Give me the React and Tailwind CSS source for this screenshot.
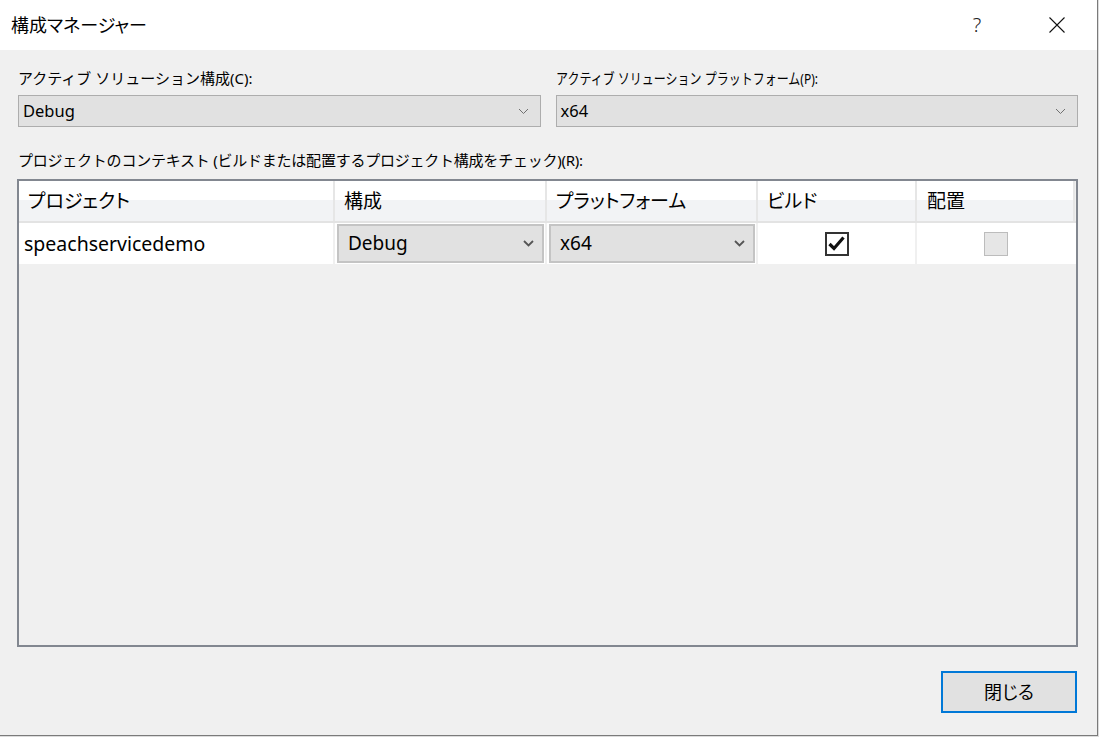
import React from "react";

const font = { fontFamily: '"Noto Sans", "Noto Sans CJK JP", sans-serif' };

const Chevron = ({ bold }) => (
  <svg width="11" height="7" viewBox="0 0 11 7" className="shrink-0">
    <path
      d="M1 1 L5.5 5.5 L10 1"
      fill="none"
      stroke={bold ? "#555555" : "#707070"}
      strokeWidth={bold ? 1.8 : 1}
    />
  </svg>
);

const Combo = ({ value }) => (
  <div className="h-[32px] flex items-center justify-between bg-[#e1e1e1] border border-[#adadad] pl-[4px] pr-[11px] text-[16.5px] text-black">
    <span>{value}</span>
    <Chevron />
  </div>
);

const CellCombo = ({ value }) => (
  <div className="h-full flex items-center justify-between bg-[#e1e1e1] border-2 border-[#c4c4c4] pl-[9px] pr-[8px] text-[19px] text-black">
    <span>{value}</span>
    <Chevron bold />
  </div>
);

const headers = [
  { label: "プロジェクト", w: "w-[316px]", pl: "pl-[9px]" },
  { label: "構成", w: "w-[212px]", pl: "pl-[9px]" },
  { label: "プラットフォーム", w: "w-[211px]", pl: "pl-[9px]" },
  { label: "ビルド", w: "w-[159px]", pl: "pl-[9px]" },
  { label: "配置", w: "w-[158px]", pl: "pl-[10px]" },
];

export default function App() {
  return (
    <div className="w-[1099px] h-[737px] bg-[#dcdcdc]" style={font}>
      <div className="w-[1098px] h-[736px] bg-[#f0f0f0] border-r border-b border-[#7a7a7a] flex flex-col">
        {/* title bar */}
        <div className="h-[50px] bg-white flex items-center shrink-0">
          <span className="pl-[11px] text-[18px] text-black [font-feature-settings:'palt']">構成マネージャー</span>
          <div className="ml-auto flex items-center">
            <span className="w-[20px] text-center text-[20px] font-light text-[#222] mr-[62px]">?</span>
            <svg width="16" height="16" viewBox="0 0 16 16" className="mr-[32px]">
              <path d="M0.5 0.5 L15.5 15.5 M15.5 0.5 L0.5 15.5" stroke="#111" strokeWidth="1.1" />
            </svg>
          </div>
        </div>

        {/* body */}
        <div className="flex-1 flex flex-col pl-[17px] pr-[19px] pt-[18px] text-black">
          <div className="grid grid-cols-2 gap-x-[15px] pl-px">
            <div>
              <div className="h-[20px] leading-[20px] text-[15px]">アクティブ ソリューション構成(C):</div>
              <div className="mt-[7px]">
                <Combo value="Debug" />
              </div>
            </div>
            <div>
              <div className="h-[20px] leading-[20px] text-[15px] whitespace-nowrap">
                <span className="inline-block origin-left scale-x-[0.8]">アクティブ ソリューション プラットフォーム(P):</span>
              </div>
              <div className="mt-[7px]">
                <Combo value="x64" />
              </div>
            </div>
          </div>

          <div className="mt-[23px] pl-px h-[20px] leading-[20px] text-[15px] tracking-[-0.23px]">
            プロジェクトのコンテキスト (ビルドまたは配置するプロジェクト構成をチェック)(R):
          </div>

          <div className="mt-[9px] h-[468px] border-2 border-[#828790] bg-[#f0f0f0]">
            {/* header row */}
            <div className="flex h-[42px] border-b-2 border-[#e3e3e3]">
              {headers.map((h) => (
                <div
                  key={h.label}
                  className={`${h.w} ${h.pl} flex items-center border-r-2 border-[#e6e6e6] text-[19px] [font-feature-settings:'palt'] bg-[linear-gradient(to_bottom,#ffffff_0%,#ffffff_48%,#f2f3f5_48%,#f2f3f5_100%)]`}
                >
                  {h.label}
                </div>
              ))}
            </div>
            {/* data row */}
            <div className="flex h-[41px] bg-white">
              <div className="w-[316px] pl-[5px] flex items-center border-r-2 border-[#f0f0f0] text-[19.5px]">
                speachservicedemo
              </div>
              <div className="w-[212px] p-px pl-[2px] border-r-2 border-[#f0f0f0]">
                <CellCombo value="Debug" />
              </div>
              <div className="w-[211px] p-px pl-[2px] border-r-2 border-[#f0f0f0]">
                <CellCombo value="x64" />
              </div>
              <div className="w-[159px] flex items-center justify-center border-r-2 border-[#f0f0f0]">
                <div className="w-[24px] h-[24px] border-2 border-[#333] bg-white flex items-center justify-center">
                  <svg width="17" height="15" viewBox="0 0 17 15">
                    <path d="M1.5 8 L6 12.5 L15.5 1.5" fill="none" stroke="#111" strokeWidth="3.2" />
                  </svg>
                </div>
              </div>
              <div className="w-[158px] flex items-center justify-center">
                <div className="w-[24px] h-[24px] border border-[#bcbcbc] bg-[#e6e6e6]" />
              </div>
            </div>
          </div>

          <div className="mt-[24px] flex justify-end pr-px">
            <button className="w-[136px] h-[42px] bg-[#e1e1e1] border-2 border-[#0078d7] text-[18px] text-black flex items-center justify-center [font-feature-settings:'palt']">
              閉じる
            </button>
          </div>
        </div>
      </div>
    </div>
  );
}
